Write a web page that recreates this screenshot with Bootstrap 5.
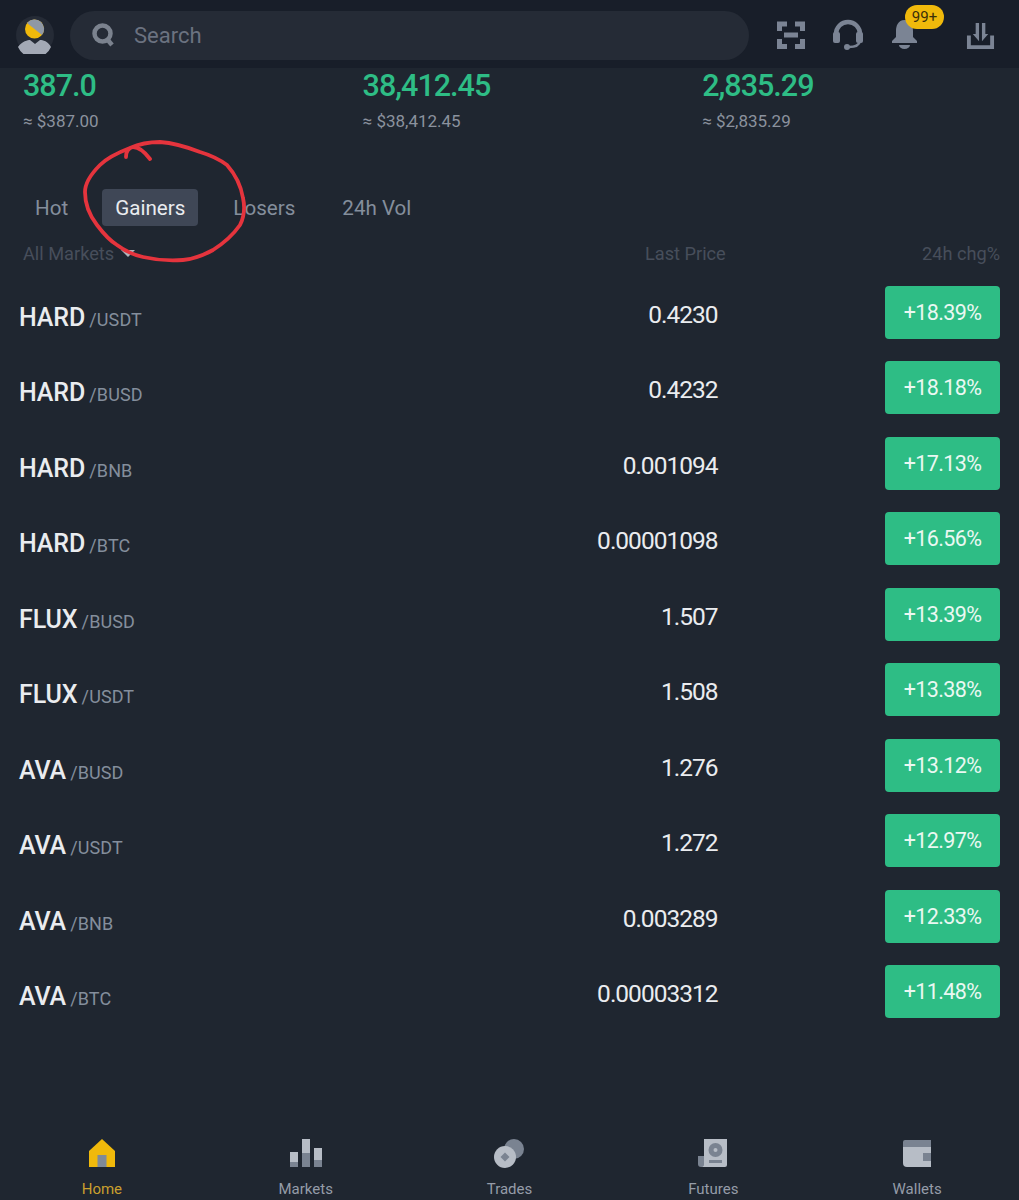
<!DOCTYPE html>
<html>
<head>
  <meta charset="utf-8"/>
  <title>Markets</title>
  <link rel="stylesheet" href="https://cdn.jsdelivr.net/npm/bootstrap@5.3.2/dist/css/bootstrap.min.css">
  <style>
    body {
      background-color: #1f2630;
      font-family: Roboto, "Liberation Sans", sans-serif;
      color: #eaecef;
      position: relative;
      height: 1200px;
      overflow: hidden;
    }
    .top-bar {
      height: 68px;
      background: #181e29;
      padding: 2px 18px 0 16px;
      gap: 16px;
    }
    .search-box {
      width: 679px;
      height: 49px;
      background: #252b36;
      border-radius: 25px;
      padding-left: 22px;
      gap: 18px;
      color: #6b7280;
      font-size: 22px;
    }
    .top-icons { margin-left: 12px; gap: 27px; }
    .bell-wrap { position: relative; width: 27px; height: 32px; margin-right: -3px; }
    .bell-badge {
      position: absolute;
      top: -14px;
      left: 14px;
      width: 39px;
      height: 24px;
      line-height: 24px;
      text-align: center;
      font-size: 15px;
      color: #3a2f0a;
      background: #f0b90b;
      border-radius: 12px;
    }
    .ticker { padding-top: 1px; height: 79px; }
    .ticker-col { width: 339.6px; padding-left: 23px; }
    .ticker-price { color: #2ebd85; font-size: 30.5px; line-height: 33px; font-weight: 500; letter-spacing: -1px; }
    .ticker-usd { color: #8b929e; font-size: 17px; line-height: 20px; margin-top: 9px; }
    .tab-row { padding: 42px 0 0 22px; gap: 21px; }
    .tab-item {
      height: 37px;
      line-height: 39px;
      padding: 0 13px;
      border-radius: 4px;
      font-size: 20.6px;
      color: #848e9c;
    }
    .tab-item.on { background: #3f4756; color: #eaecef; margin-right: 1px; }
    .head-row {
      height: 22px;
      margin-top: 16px;
      padding: 0 19px 0 23px;
      font-size: 18.2px;
      line-height: 23px;
      color: #474e5b;
    }
    .caret-down {
      display: inline-block;
      width: 0;
      height: 0;
      margin-left: 7px;
      vertical-align: 3px;
      border-left: 7px solid transparent;
      border-right: 7px solid transparent;
      border-top: 7px solid #aeb4bc;
    }
    .price-head { width: 200px; margin-left: auto; margin-right: 157px; padding-left: 80px; text-align: left; }
    .market-list { margin-top: 21.7px; padding: 0 19px; }
    .market-row { height: 75.5px; }
    .pair-name { width: 360px; font-size: 25px; font-weight: 500; padding-top: 13px; letter-spacing: -.1px; color: #eaecef; }
    .pair-quote { font-size: 18px; font-weight: 400; color: #848e9c; margin-left: -2px; letter-spacing: .1px; }
    .pair-price { width: 338.5px; text-align: right; font-size: 24.5px; padding-top: 7px; color: #eaecef; line-height: 44px; letter-spacing: -1px; }
    .chg-pill {
      margin-left: auto;
      width: 115px;
      height: 53px;
      line-height: 53px;
      text-align: center;
      font-size: 21.5px;
      color: #eaf8f2;
      background: #2ebd85;
      border-radius: 4px;
      letter-spacing: -.6px;
    }
    .bottom-nav {
      position: absolute;
      left: 0;
      right: 0;
      bottom: 0;
      height: 62px;
    }
    .nav-cell { width: 20%; text-align: center; font-size: 15px; line-height: 18px; color: #959ca8; }
    .nav-cell svg { display: block; margin: 0 auto 12px; }
    .nav-cell.on { color: #c99f2e; }
    .scribble { position: absolute; left: 0; top: 0; pointer-events: none; }
  </style>
</head>
<body>

<!-- barra de cima -->
<div class="top-bar d-flex align-items-center">
  <svg width="38" height="38" viewBox="0 0 38 38">
    <circle cx="19" cy="19" r="19" fill="#252b36"/>
    <circle cx="18.5" cy="13" r="9.5" fill="#f0b90b"/>
    <path d="M11 7 A9.500 9.500 0 0 1 26 19 Z" fill="#8f98a6"/>
    <path d="M2 31 C6 25 12 24 14 24 L19 28 L24 24 C27 24 32 25 35 31 A18 18 0 0 1 2 31 Z" fill="#a3a9b5"/>
  </svg>
  <div class="search-box d-flex align-items-center">
    <svg width="24" height="24" viewBox="0 0 24 24">
      <circle cx="10.500" cy="10.500" r="8" fill="none" stroke="#7b828e" stroke-width="4.500"/>
      <path d="M15 16 L20 22" stroke="#7b828e" stroke-width="4.500"/>
    </svg>
    <span>Search</span>
  </div>
  <div class="top-icons d-flex align-items-center">
    <svg width="28" height="28" viewBox="0 0 28 28" fill="none" stroke="#7b8494" stroke-width="5">
      <path d="M2.500 10 V3 H10 M18 3 H25.500 V10 M2.500 18 V25.500 H10 M18 25.500 H25.500 V18"/>
      <path d="M7 14 H21"/>
    </svg>
    <svg width="32" height="32" viewBox="0 0 32 32" fill="none">
      <path d="M4 20 V15 A12 12 0 0 1 28 15 V20" stroke="#7b8494" stroke-width="4.500"/>
      <rect x="1" y="13" width="7" height="11" rx="2" fill="#7b8494"/>
      <rect x="24" y="13" width="7" height="11" rx="2" fill="#7b8494"/>
      <path d="M28 22 C27 27 22 28 17 28" stroke="#7b8494" stroke-width="2.500"/>
      <circle cx="15" cy="28" r="3" fill="#7b8494"/>
    </svg>
    <div class="bell-wrap">
      <svg width="27" height="30" viewBox="0 0 27 30">
        <path d="M13.500 1 C20 1 22 7 22 12 V18 L26 22 V24 H1 V22 L5 18 V12 C5 7 7 1 13.500 1 Z" fill="#7b8494"/>
        <path d="M8 26 H19 A5.500 4 0 0 1 8 26 Z" fill="#7b8494"/>
      </svg>
      <div class="bell-badge">99+</div>
    </div>
    <svg class="ms-4" width="29" height="29" viewBox="0 0 30 30" fill="#7b8494">
      <path d="M1 15 H5 V25 H25 V15 H29 V29 H1 Z"/>
      <path d="M10 2 H13.500 V21 L7 13.500 H10 Z"/>
      <path d="M20 2 H16.500 V21 L23 13.500 H20 Z"/>
    </svg>
  </div>
</div>

<!-- precos em destaque -->
<div class="ticker d-flex">
  <div class="ticker-col">
    <div class="ticker-price">387.0</div>
    <div class="ticker-usd">≈ $387.00</div>
  </div>
  <div class="ticker-col">
    <div class="ticker-price">38,412.45</div>
    <div class="ticker-usd">≈ $38,412.45</div>
  </div>
  <div class="ticker-col">
    <div class="ticker-price">2,835.29</div>
    <div class="ticker-usd">≈ $2,835.29</div>
  </div>
</div>

<div class="tab-row d-flex">
  <div class="tab-item">Hot</div>
  <div class="tab-item on">Gainers</div>
  <div class="tab-item">Losers</div>
  <div class="tab-item">24h Vol</div>
</div>

<div class="head-row d-flex">
  <div>All Markets<span class="caret-down"></span></div>
  <div class="price-head">Last Price</div>
  <div>24h chg%</div>
</div>

<div class="market-list">
  <div class="market-row d-flex"><div class="pair-name">HARD <span class="pair-quote">/USDT</span></div><div class="pair-price">0.4230</div><div class="chg-pill">+18.39%</div></div>
  <div class="market-row d-flex"><div class="pair-name">HARD <span class="pair-quote">/BUSD</span></div><div class="pair-price">0.4232</div><div class="chg-pill">+18.18%</div></div>
  <div class="market-row d-flex"><div class="pair-name">HARD <span class="pair-quote">/BNB</span></div><div class="pair-price">0.001094</div><div class="chg-pill">+17.13%</div></div>
  <div class="market-row d-flex"><div class="pair-name">HARD <span class="pair-quote">/BTC</span></div><div class="pair-price">0.00001098</div><div class="chg-pill">+16.56%</div></div>
  <div class="market-row d-flex"><div class="pair-name">FLUX <span class="pair-quote">/BUSD</span></div><div class="pair-price">1.507</div><div class="chg-pill">+13.39%</div></div>
  <div class="market-row d-flex"><div class="pair-name">FLUX <span class="pair-quote">/USDT</span></div><div class="pair-price">1.508</div><div class="chg-pill">+13.38%</div></div>
  <div class="market-row d-flex"><div class="pair-name">AVA <span class="pair-quote">/BUSD</span></div><div class="pair-price">1.276</div><div class="chg-pill">+13.12%</div></div>
  <div class="market-row d-flex"><div class="pair-name">AVA <span class="pair-quote">/USDT</span></div><div class="pair-price">1.272</div><div class="chg-pill">+12.97%</div></div>
  <div class="market-row d-flex"><div class="pair-name">AVA <span class="pair-quote">/BNB</span></div><div class="pair-price">0.003289</div><div class="chg-pill">+12.33%</div></div>
  <div class="market-row d-flex"><div class="pair-name">AVA <span class="pair-quote">/BTC</span></div><div class="pair-price">0.00003312</div><div class="chg-pill">+11.48%</div></div>
</div>

<!-- menu de baixo -->
<div class="bottom-nav d-flex">
  <div class="nav-cell on">
    <svg width="28" height="30" viewBox="0 0 28 30">
      <path d="M14 1 L27 13 V29 H1 V13 Z" fill="#f0b90b"/>
      <rect x="9.500" y="17" width="9" height="12" fill="#7f8a99"/>
    </svg>
    Home
  </div>
  <div class="nav-cell">
    <svg width="32" height="30" viewBox="0 0 32 30">
      <rect x="0" y="14" width="8" height="15" fill="#b7bdc6"/>
      <rect x="0" y="24" width="8" height="5" fill="#7a8391"/>
      <rect x="12" y="1" width="8" height="28" fill="#b7bdc6"/>
      <rect x="12" y="15" width="8" height="14" fill="#7a8391"/>
      <rect x="24" y="10" width="8" height="19" fill="#b7bdc6"/>
      <rect x="24" y="22" width="8" height="7" fill="#7a8391"/>
    </svg>
    Markets
  </div>
  <div class="nav-cell">
    <svg width="30" height="30" viewBox="0 0 30 30">
      <circle cx="20" cy="11" r="10" fill="#7a8391"/>
      <circle cx="11" cy="19" r="11" fill="#b7bdc6"/>
      <path d="M11 14.500 L15.500 19 L11 23.500 L6.500 19 Z" fill="#7a8391"/>
    </svg>
    Trades
  </div>
  <div class="nav-cell">
    <svg width="30" height="30" viewBox="0 0 30 30">
      <path d="M0 18 H7 V29 H3 A3 3 0 0 1 0 26 Z" fill="#7a8391"/>
      <path d="M6 1 H29 V27 A2 2 0 0 1 27 29 H3 C6 29 6 27 6 26 Z" fill="#b7bdc6"/>
      <circle cx="17.500" cy="12" r="7" fill="#7a8391"/>
      <circle cx="17.500" cy="12" r="2" fill="#b7bdc6"/>
      <rect x="11" y="22" width="13" height="3" fill="#7a8391"/>
    </svg>
    Futures
  </div>
  <div class="nav-cell">
    <svg width="28" height="30" viewBox="0 0 28 30">
      <path d="M0 4 A2 2 0 0 1 2 2 H28 V9 H0 Z" fill="#7a8391"/>
      <path d="M0 9 H28 V29 H4 A4 4 0 0 1 0 25 Z" fill="#b7bdc6"/>
      <rect x="20" y="15" width="8" height="8" fill="#7a8391"/>
    </svg>
    Wallets
  </div>
</div>

<!-- circulo vermelho feito a mao por cima da tela -->
<svg class="scribble" width="1019" height="1200" viewBox="0 0 1019 1200" fill="none">
  <path d="M150 159 C144 151 139 147 133 147 C129 148 126 151 126 157 M130 148 C117 153 107 158 100 165 C91 174 85 183 85 192 C85 205 90 216 97 225 C103 233 109 240 117 245 C125 251 134 255 143 257 C156 260 170 261 183 260 C194 259 204 255 213 250 C224 243 233 235 240 225 C244 217 245 207 243 198 C241 186 235 174 227 165 C219 159 210 155 200 152 C187 147 174 143 160 142 C149 142 139 144 130 148" stroke="#e5343d" stroke-width="3.800" stroke-linecap="round"/>
</svg>

<script src="https://cdn.jsdelivr.net/npm/bootstrap@5.3.2/dist/js/bootstrap.bundle.min.js"></script>
</body>
</html>
